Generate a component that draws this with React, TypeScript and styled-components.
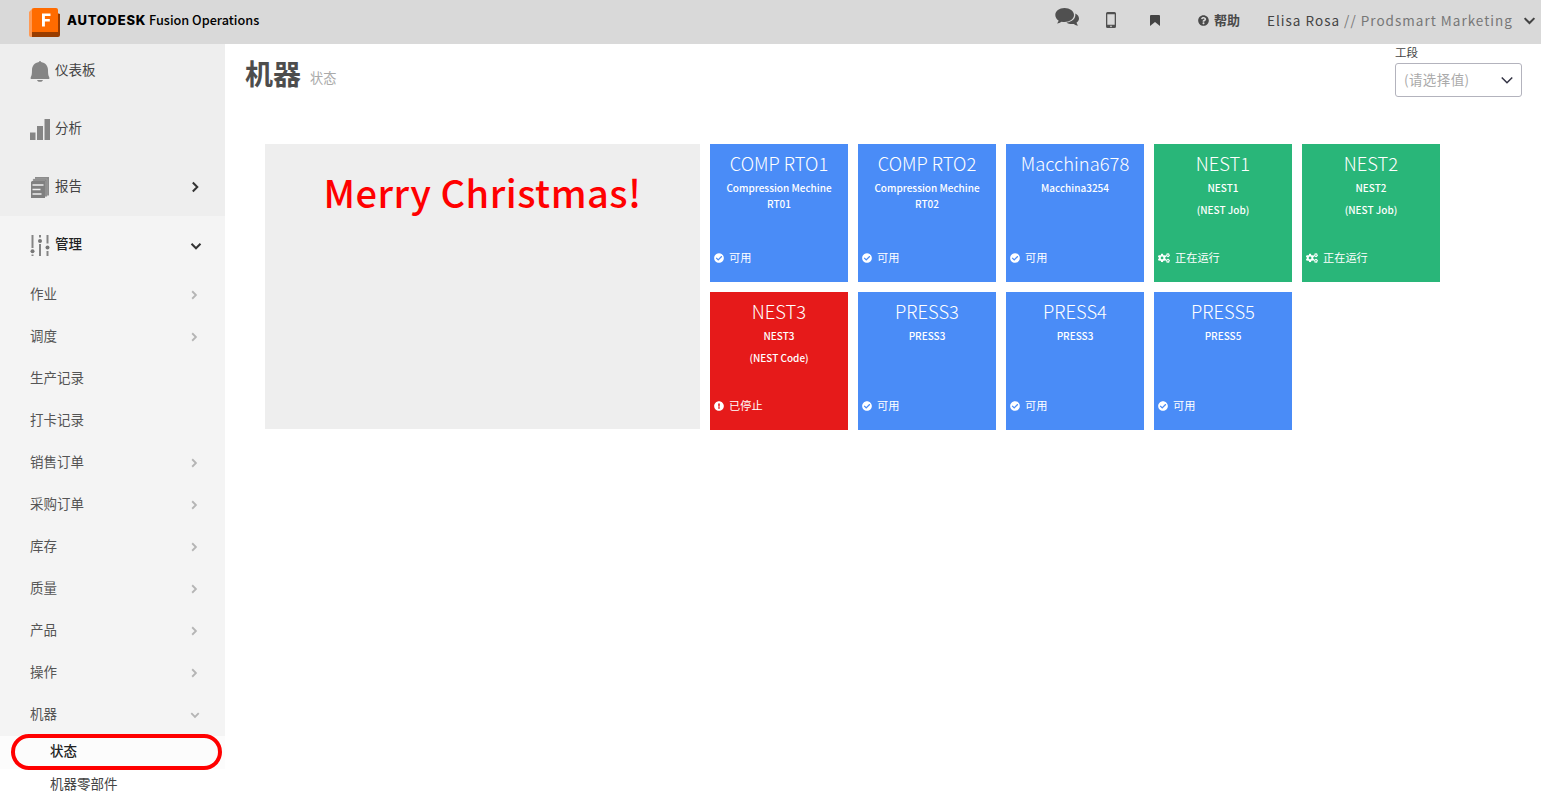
import React from "react";
import styled, { createGlobalStyle } from "styled-components";
import { FaCheckCircle, FaCogs, FaExclamationCircle, FaQuestionCircle } from "react-icons/fa";

const GlobalStyle = createGlobalStyle`
  * { box-sizing: border-box; }
  body {
    margin: 0;
    background: #fff;
    font-family: "Noto Sans", "Noto Sans CJK SC", sans-serif;
    color: #4a4a4a;
  }
`;

const cjk = `"Noto Sans CJK SC", sans-serif`;

const Page = styled.div`
  height: 800px;
  overflow: hidden;
  display: flex;
  flex-direction: column;
`;

const TopBar = styled.header`
  height: 44px;
  flex: none;
  background: #d9d9d9;
  display: flex;
  align-items: center;
  padding: 0 5px 4px 29px;
`;

const Brand = styled.div`
  display: flex;
  align-items: center;
  color: #000;
  font-size: 13px;
  white-space: nowrap;
  svg { margin: 5px 6px 0 0; }
`;

const BrandName = styled.strong`
  font-family: Inter, sans-serif;
  font-weight: 800;
  font-size: 13px;
  letter-spacing: 0.75px;
  width: 82px;
`;

const Product = styled.span`
  font-family: ${cjk};
  font-weight: 500;
  font-size: 12.7px;
  margin-top: -2px;
`;

const Tools = styled.div`
  margin-left: auto;
  display: flex;
  align-items: center;
`;

const Tool = styled.span<{ $gap: number; $up?: number }>`
  display: flex;
  margin-right: ${(p) => p.$gap}px;
  padding-bottom: ${(p) => p.$up || 0}px;
`;

const Help = styled.span`
  display: flex;
  align-items: center;
  gap: 5px;
  width: 69px;
  font: bold 13px/20px ${cjk};
`;

const Account = styled.span`
  display: flex;
  align-items: center;
  font: 13.5px/20px ${cjk};
  letter-spacing: 1.01px;
  color: #444;
  width: 269px;
  justify-content: space-between;
  white-space: pre;
  svg { margin-top: 1px; }
`;

const Company = styled.span`
  color: #777;
`;

const Body = styled.div`
  display: flex;
  flex: 1;
  min-height: 0;
`;

const Sidebar = styled.nav`
  width: 225px;
  flex: none;
`;

const NavGroup = styled.div<{ $h: number; $bg: string }>`
  height: ${(p) => p.$h}px;
  background: ${(p) => p.$bg};
`;

const NavItem = styled.div<{ $active?: boolean }>`
  height: ${(p) => (p.$active ? 56 : 58)}px;
  padding: ${(p) => (p.$active ? 17 : 15)}px ${(p) => (p.$active ? 22 : 23)}px 0 30px;
  display: flex;
  align-items: flex-start;
  font: ${(p) => (p.$active ? 500 : 400)} 13.5px/20px ${cjk};
  color: ${(p) => (p.$active ? "#222" : "#444")};
`;

const NavIcon = styled.span`
  width: 25px;
  padding-top: 2px;
  svg { display: block; }
`;

const Arrow = styled.span<{ $dim?: boolean; $down?: boolean }>`
  margin: ${(p) => (p.$dim || p.$down ? 3 : 2)}px ${(p) => (p.$dim && p.$down ? -1 : 0)}px 0 auto;
  width: 14px;
  height: 20px;
  display: flex;
  align-items: center;
  justify-content: center;
  color: ${(p) => (p.$dim ? "#b5b5b5" : "#333")};
`;

const SubItem = styled.div`
  height: 42px;
  padding: 0 24px 0 30px;
  display: flex;
  align-items: center;
  font: 13.5px/20px ${cjk};
  color: #555;
`;

const Leaf = styled.div<{ $current?: boolean }>`
  position: relative;
  z-index: ${(p) => (p.$current ? 1 : 0)};
  height: 33px;
  padding: 4px 0 0 50px;
  background: ${(p) => (p.$current ? "#fcfcfc" : "#fff")};
  font: ${(p) => (p.$current ? 500 : 400)} 13.5px/20px ${cjk};
  color: ${(p) => (p.$current ? "#222" : "#444")};
`;

const Highlight = styled.span`
  position: absolute;
  left: 11px;
  top: -2px;
  width: 211px;
  height: 36px;
  border: 4px solid #f00;
  border-radius: 18px;
`;

const Main = styled.main`
  flex: 1;
  display: flex;
  flex-direction: column;
`;

const Heading = styled.div`
  height: 100px;
  padding: 0 19px 0 20px;
  display: flex;
  justify-content: space-between;
`;

const Title = styled.h1`
  margin: 8px 0 0;
  display: flex;
  align-items: baseline;
  gap: 9px;
  height: 42px;
  font: bold 28px/42px ${cjk};
  color: #4d4d4d;
  small {
    position: relative;
    top: -2px;
    font-size: 13.2px;
    font-weight: 400;
    line-height: 20px;
    color: #aaa;
  }
`;

const Field = styled.label`
  width: 127px;
  margin-top: -1px;
  font: 11.5px/18px ${cjk};
  color: #444;
`;

const Select = styled.div`
  height: 34px;
  margin-top: 2px;
  padding: 0 7px 3px 8px;
  border: 1px solid #b3b3bd;
  border-radius: 3px;
  display: flex;
  align-items: center;
  justify-content: space-between;
  font: 13.5px/20px ${cjk};
  letter-spacing: 0.4px;
  color: #aaa;
  svg { color: #334; margin-top: 3px; }
`;

const Board = styled.div`
  display: flex;
  gap: 10px;
  padding-left: 40px;
`;

const Message = styled.div`
  width: 435px;
  height: 285px;
  padding-top: 19px;
  background: #eee;
  color: #f00;
  text-align: center;
  font: 500 38px/58px ${cjk};
  letter-spacing: 0.5px;
`;

const Tiles = styled.div`
  display: grid;
  grid-template-columns: repeat(5, 138px);
  grid-auto-rows: 138px;
  gap: 10px;
`;

const tones = { free: "#4a8cf7", running: "#29b679", stopped: "#e61a1a" };
type Tone = keyof typeof tones;

const Tile = styled.article<{ $tone: Tone }>`
  background: ${(p) => tones[p.$tone]};
  color: #fff;
  display: flex;
  flex-direction: column;
  padding: 5px 4px 14px;
  text-align: center;
  font-family: ${cjk};
`;

const Code = styled.div`
  font-size: 18.4px;
  font-weight: 300;
  line-height: 28px;
  margin-bottom: 1px;
  white-space: nowrap;
`;

const Name = styled.div`
  margin-top: 2px;
  padding: 0 8px;
  font-size: 10px;
  font-weight: 500;
  line-height: 16px;
  & + & { margin-top: 6px; }
`;

const State = styled.div`
  margin-top: auto;
  display: flex;
  align-items: center;
  gap: 5px;
  font-size: 11.2px;
  line-height: 18px;
  span { padding-bottom: 2px; }
`;

function Chevron({ down, w = 2, size = 12 }: { down?: boolean; w?: number; size?: number }) {
  return (
    <svg width={size} height={size} viewBox="0 0 12 12" fill="none" stroke="currentColor" strokeWidth={w}>
      <path d={down ? "M1.5 3.8 6 8.3l4.5-4.5" : "M3.8 1.5 8.3 6l-4.5 4.5"} />
    </svg>
  );
}

const icons = {
  bell: (
    <svg width="20" height="22" viewBox="0 0 20 22" fill="#858585">
      <path d="M9 1a1 1 0 0 1 2 0c4.600.8 7 4 7 8 0 4 .3 5.800 1.300 7.300V18H.700v-1.700C1.700 14.800 2 13 2 9c0-4 2.400-7.200 7-8zM7 19h6c-.400 1.300-1.500 1.800-3 1.800S7.400 20.300 7 19z" />
    </svg>
  ),
  bars: (
    <svg width="20" height="22" viewBox="0 0 20 22" fill="#858585">
      <path d="M0 13.500h5.500V21H0zM7 7h6v14H7zM14.500 0H20v21h-5.500z" />
    </svg>
  ),
  report: (
    <svg width="20" height="22" viewBox="0 0 20 22">
      <path d="M5 0h14v18.500h-2V2H5z" fill="#8c8c8c" />
      <path d="M3 2h14v17.500h-2V4H3z" fill="#858585" stroke="#bbb" strokeWidth=".4" />
      <path d="M2 4h13v17H1V5z" fill="#808080" />
      <path d="M2.500 8h11M2.500 12.500h8M2.500 17h9" stroke="#eee" strokeWidth="1.600" />
    </svg>
  ),
  sliders: (
    <svg width="20" height="22" viewBox="0 0 20 22" fill="#777" stroke="#858585" strokeWidth="2">
      <path d="M2.500 0v13M2.500 19.500V21M10 0v2.500M10 9v12M17.500 0v8.500M17.500 16v5" />
      <g stroke="none">
        <circle cx="2.500" cy="16.300" r="2" />
        <circle cx="10" cy="6" r="2" />
        <circle cx="17.500" cy="12.500" r="2" />
      </g>
    </svg>
  ),
};

const sections: [string, keyof typeof icons, boolean][] = [
  ["仪表板", "bell", false],
  ["分析", "bars", false],
  ["报告", "report", true],
];

const subItems: [string, string][] = [
  ["作业", "right"],
  ["调度", "right"],
  ["生产记录", ""],
  ["打卡记录", ""],
  ["销售订单", "right"],
  ["采购订单", "right"],
  ["库存", "right"],
  ["质量", "right"],
  ["产品", "right"],
  ["操作", "right"],
  ["机器", "down"],
];

const machines: { code: string; names: string[]; tone: Tone }[] = [
  { code: "COMP RTO1", names: ["Compression Mechine RT01"], tone: "free" },
  { code: "COMP RTO2", names: ["Compression Mechine RT02"], tone: "free" },
  { code: "Macchina678", names: ["Macchina3254"], tone: "free" },
  { code: "NEST1", names: ["NEST1", "(NEST Job)"], tone: "running" },
  { code: "NEST2", names: ["NEST2", "(NEST Job)"], tone: "running" },
  { code: "NEST3", names: ["NEST3", "(NEST Code)"], tone: "stopped" },
  { code: "PRESS3", names: ["PRESS3"], tone: "free" },
  { code: "PRESS4", names: ["PRESS3"], tone: "free" },
  { code: "PRESS5", names: ["PRESS5"], tone: "free" },
];

const states = {
  free: { icon: <FaCheckCircle size={10} />, label: "可用" },
  running: { icon: <FaCogs size={12} />, label: "正在运行" },
  stopped: { icon: <FaExclamationCircle size={10} />, label: "已停止" },
};

export default function App() {
  return (
    <Page>
      <GlobalStyle />
      <TopBar>
        <Brand>
          <svg width="32" height="30" viewBox="0 0 32 30">
            <path d="M0 4 4 0v25l-1 4H2a2 2 0 0 1-2-2z" fill="#ff9a55" />
            <path d="M3 24h25V5l3 1v21a2 2 0 0 1-2 2H3z" fill="#993d00" />
            <path d="M5 0h22a2 2 0 0 1 2 2v22H3V2a2 2 0 0 1 2-2z" fill="#ff6b00" />
            <path d="M13 5.500h8.500v2.500h-5.600v3h4.900v2.600h-4.900v4.900H13z" fill="#fff" />
          </svg>
          <BrandName>AUTODESK</BrandName>
          <Product>Fusion Operations</Product>
        </Brand>
        <Tools>
          <Tool $gap={26} $up={6}>
            <svg width="25" height="20" viewBox="0 0 25 20" fill="#505050">
              <path d="M9.500 1C14.700 1 19 4 19 8s-4.300 7-9.500 7c-1 0-2-.1-2.900-.3C5 15.700 3.500 16.300 2 16.400c.9-.9 1.400-1.700 1.600-2.900C1.400 12.200.300 10.200.300 8c0-4 4-7 9.200-7z" />
              <path d="M20.300 6.500c2.300 1 3.700 2.800 3.700 4.900 0 1.700-.9 3.200-2.400 4.200.2 1.300.8 2.200 1.700 3-1.700-.1-3.100-.7-4.400-1.700-2.800.5-5.700-.1-7.500-1.500 5.600-.3 9.700-3.900 8.900-8.900z" />
            </svg>
          </Tool>
          <Tool $gap={34}>
            <svg width="10" height="16" viewBox="0 0 10 16">
              <path fillRule="evenodd" d="M1.500 0h7A1.500 1.500 0 0 1 10 1.500v13A1.500 1.500 0 0 1 8.500 16h-7A1.500 1.500 0 0 1 0 14.500v-13A1.500 1.500 0 0 1 1.500 0zM1.300 2.300v10.400h7.400V2.300zM5 13.600a.8.8 0 1 0 0 1.600.8.8 0 0 0 0-1.600z" fill="#505050" />
            </svg>
          </Tool>
          <Tool $gap={38}>
            <svg width="10" height="11" viewBox="0 0 10 11">
              <path d="M1 0h8a1 1 0 0 1 1 1v10L5 7l-5 4V1a1 1 0 0 1 1-1z" fill="#444" />
            </svg>
          </Tool>
          <Help>
            <FaQuestionCircle size={11} />
            帮助
          </Help>
          <Account>
            <span>
              Elisa Rosa <Company>// Prodsmart Marketing</Company>
            </span>
            <Chevron down size={13} w={1.900} />
          </Account>
        </Tools>
      </TopBar>
      <Body>
        <Sidebar>
          <NavGroup $h={172} $bg="#eee">
            {sections.map(([label, icon, more]) => (
              <NavItem key={label}>
                <NavIcon>{icons[icon]}</NavIcon>
                {label}
                {more && <Arrow><Chevron size={12} w={2} /></Arrow>}
              </NavItem>
            ))}
          </NavGroup>
          <NavGroup $h={520} $bg="#f4f4f4">
            <NavItem $active>
              <NavIcon>{icons.sliders}</NavIcon>
              管理
              <Arrow $down><Chevron down w={2} /></Arrow>
            </NavItem>
            {subItems.map(([label, dir]) => (
              <SubItem key={label}>
                {label}
                {dir && (
                  <Arrow $dim $down={dir === "down"}>
                    <Chevron down={dir === "down"} size={10} w={2.200} />
                  </Arrow>
                )}
              </SubItem>
            ))}
          </NavGroup>
          <Leaf $current>
            状态
            <Highlight />
          </Leaf>
          <Leaf>机器零部件</Leaf>
        </Sidebar>
        <Main>
          <Heading>
            <Title>机器<small>状态</small></Title>
            <Field>
              工段
              <Select>
                (请选择值)
                <Chevron down size={14} w={1.300} />
              </Select>
            </Field>
          </Heading>
          <Board>
            <Message>Merry Christmas!</Message>
            <Tiles>
              {machines.map((m) => (
                <Tile key={m.code} $tone={m.tone}>
                  <Code>{m.code}</Code>
                  {m.names.map((n) => <Name key={n}>{n}</Name>)}
                  <State>
                    {states[m.tone].icon}
                    <span>{states[m.tone].label}</span>
                  </State>
                </Tile>
              ))}
            </Tiles>
          </Board>
        </Main>
      </Body>
    </Page>
  );
}
